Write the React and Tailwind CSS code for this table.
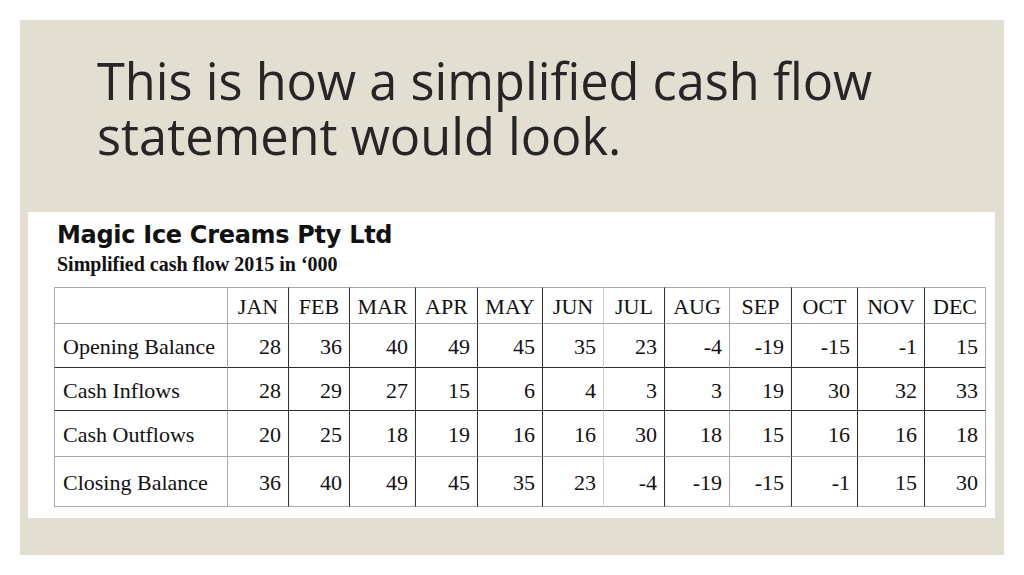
const months = ["JAN", "FEB", "MAR", "APR", "MAY", "JUN", "JUL", "AUG", "SEP", "OCT", "NOV", "DEC"];

const rows = [
  { label: "Opening Balance", values: [28, 36, 40, 49, 45, 35, 23, -4, -19, -15, -1, 15] },
  { label: "Cash Inflows", values: [28, 29, 27, 15, 6, 4, 3, 3, 19, 30, 32, 33] },
  { label: "Cash Outflows", values: [20, 25, 18, 19, 16, 16, 30, 18, 15, 16, 16, 18] },
  { label: "Closing Balance", values: [36, 40, 49, 45, 35, 23, -4, -19, -15, -1, 15, 30] },
];

// line shade per vertical / horizontal rule, as in the scanned table
const vLines = ["g", "g", "d", "d", "d", "d", "d", "l", "d", "g", "d", "d", "d", "g"];
const hLines = ["g", "g", "d", "d", "g", "g"];

const leftCls = { d: "border-l-[#2e2e2e]", g: "border-l-[#a9a9a9]", l: "border-l-[#cfcfcf]" };
const topCls = { d: "border-t-[#2e2e2e]", g: "border-t-[#a9a9a9]", l: "border-t-[#cfcfcf]" };

function Cell({ col, row, children, align }) {
  const last = col === 12;
  const bottom = row === 4;
  return (
    <div
      className={[
        "flex items-center border-l border-t pt-[3px]",
        leftCls[vLines[col]],
        topCls[hLines[row]],
        last ? "border-r border-r-[#a9a9a9]" : "",
        bottom ? "border-b border-b-[#a9a9a9]" : "",
        align === "left" ? "justify-start pl-[8px]" : align === "center" ? "justify-center" : "justify-end pr-[7px]",
      ].join(" ")}
    >
      {children}
    </div>
  );
}

export default function App() {
  return (
    <div className="h-[575px] w-[1024px] bg-white pt-[20px] pl-[20px]">
      <div className="flex h-[535px] w-[984px] flex-col bg-[#e2ded1]">
        <h1
          className="ml-[77px] mt-[33px] text-[50.5px] leading-[55px] text-[#262626]"
          style={{ fontFamily: '"Open Sans", "Noto Sans", sans-serif' }}
        >
          This is how a simplified cash flow
          <br />
          statement would look.
        </h1>

        <div className="ml-[8px] mt-[49px] h-[306px] w-[967px] bg-white pl-[26px] text-[#111]">
          <div
            className="ml-[3px] pt-[9px] text-[24px] font-bold leading-[28px] tracking-[-0.3px]"
            style={{ fontFamily: '"DejaVu Sans", sans-serif' }}
          >
            Magic Ice Creams Pty Ltd
          </div>
          <div
            className="ml-[3px] mt-[4px] text-[20px] font-bold leading-[22px]"
            style={{ fontFamily: '"Liberation Serif", serif' }}
          >
            Simplified cash flow 2015 in ‘000
          </div>

          <div
            className="mt-[12px] grid grid-cols-[173px_61px_61px_66px_62px_65px_61px_61px_65px_62px_66px_67px_62px] grid-rows-[36px_44px_43px_46px_51px] text-[22px] leading-none"
            style={{ fontFamily: '"Liberation Serif", serif' }}
          >
            <Cell col={0} row={0} align="left" />
            {months.map((m, i) => (
              <Cell key={m} col={i + 1} row={0} align="center">
                {m}
              </Cell>
            ))}
            {rows.map((r, ri) => (
              <div key={r.label} className="contents">
                <Cell col={0} row={ri + 1} align="left">
                  {r.label}
                </Cell>
                {r.values.map((v, vi) => (
                  <Cell key={vi} col={vi + 1} row={ri + 1}>
                    {v}
                  </Cell>
                ))}
              </div>
            ))}
          </div>
        </div>
      </div>
    </div>
  );
}
